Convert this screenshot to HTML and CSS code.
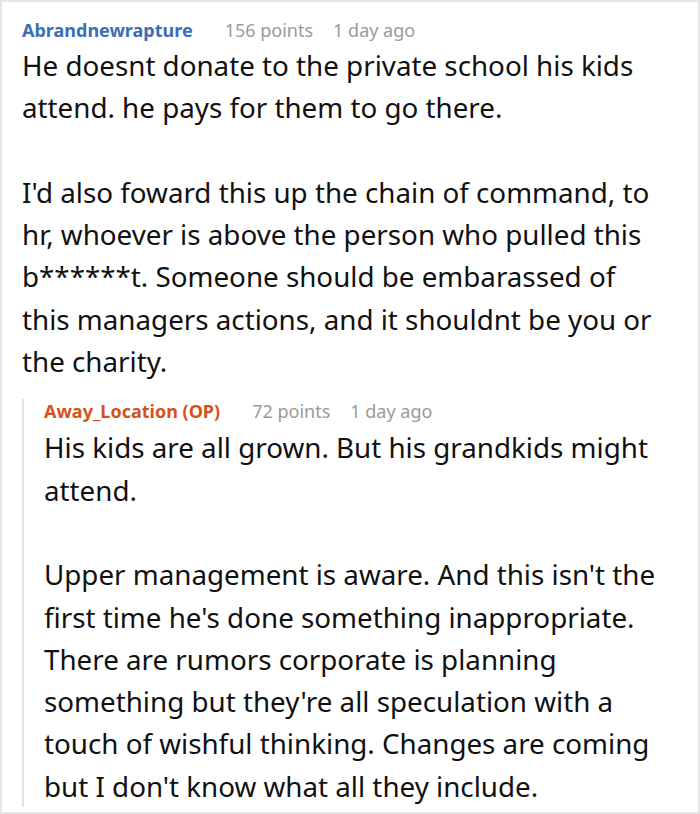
FILE: index.html
```html
<!DOCTYPE html>
<html>
<head>
<meta charset="utf-8">
<link rel="stylesheet" href="styles.css">
</head>
<body>
<div class="frame">
  <div class="comment">
    <div class="meta">
      <span class="author author-blue">Abrandnewrapture</span>
      <span class="points">156 points</span>
      <span class="time">1 day ago</span>
    </div>
    <div class="body">
      <p>He doesnt donate to the private school his kids attend. he pays for them to go there.</p>
      <p>I'd also foward this up the chain of command, to hr, whoever is above the person who pulled this b******t. Someone should be embarassed of this managers actions, and it shouldnt be you or the charity.</p>
    </div>
    <div class="reply">
      <div class="meta">
        <span class="author author-op">Away_Location (OP)</span>
        <span class="points">72 points</span>
        <span class="time">1 day ago</span>
      </div>
      <div class="body">
        <p>His kids are all grown. But his grandkids might attend.</p>
        <p>Upper management is aware. And this isn't the first time he's done something inappropriate. There are rumors corporate is planning something but they're all speculation with a touch of wishful thinking. Changes are coming but I don't know what all they include.</p>
      </div>
    </div>
  </div>
</div>
</body>
</html>
```

FILE: styles.css
```css
html, body {
  margin: 0;
  padding: 0;
  background: #ffffff;
}
.frame {
  box-sizing: border-box;
  width: 700px;
  height: 814px;
  border: 2px solid #e6e6e6;
  overflow: hidden;
  font-family: "Noto Sans", "Open Sans", sans-serif;
  color: #111111;
}
.comment {
  padding: 16px 32px 0 20px;
}
.meta {
  display: flex;
  align-items: baseline;
  font-size: 18px;
  line-height: 24px;
}
.author {
  font-weight: 700;
  margin-right: 32px;
}
.author-blue { color: #3d6db5; }
.author-op { color: #d4531b; }
.points, .time {
  color: #9a9a9a;
}
.points { margin-right: 20px; }
.body {
  font-size: 27.75px;
  line-height: 42.3px;
  margin-top: 2px;
}
.body p {
  margin: 0 0 42.3px 0;
}
.body p:last-child {
  margin-bottom: 0;
}
.reply {
  margin-top: 17px;
  border-left: 2px solid #e3e3e3;
  padding-left: 20px;
}
.reply .body {
  margin-top: 3px;
}
```
